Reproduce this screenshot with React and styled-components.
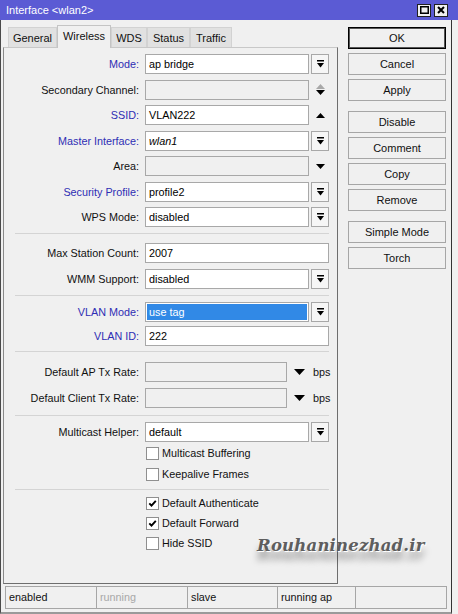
import React from "react";
import styled, { createGlobalStyle } from "styled-components";

const Global = createGlobalStyle`
  html, body { margin: 0; padding: 0; background: #f0f0f0; }
  body { font-family: "Liberation Sans", Arial, sans-serif; }
`;

const Window = styled.div`
  position: relative;
  width: 458px;
  height: 614px;
  background: #f0f0f0;
  font-family: "Liberation Sans", Arial, sans-serif;
  font-size: 10.8px;
  color: #000;
  overflow: hidden;
`;

const TitleBar = styled.div`
  height: 20px;
  background: #5b5bd4;
  color: #fff;
  display: flex;
  align-items: center;
  padding-left: 6px;
  font-size: 11px;
  box-sizing: border-box;
`;

const TitleText = styled.span`
  flex: 1;
`;

const TitleButtons = styled.div`
  display: flex;
  gap: 3px;
  margin-right: 10px;
`;

const TitleBtn = styled.div`
  width: 14px;
  height: 13px;
  background: #f0f0f0;
  border: 1px solid #202020;
  box-sizing: border-box;
  display: flex;
  align-items: center;
  justify-content: center;
`;

const Frame = styled.div`
  width: 452px;
  height: 594px;
  box-sizing: border-box;
  border-left: 1px solid #4a4a4a;
  border-right: 1px solid #333;
  border-bottom: 2px solid #9a9a9a;
  display: flex;
  flex-direction: column;
`;

const Main = styled.div`
  display: flex;
  height: 564px;
  padding-left: 2px;
`;

const LeftCol = styled.div`
  width: 335px;
  display: flex;
  flex-direction: column;
`;

const TabBar = styled.div`
  height: 27px;
  display: flex;
  align-items: flex-end;
  padding-left: 5px;
  box-sizing: border-box;
`;

const Tab = styled.div`
  width: ${(p) => p.$w}px;
  height: ${(p) => (p.$active ? 23 : 20)}px;
  box-sizing: border-box;
  display: flex;
  align-items: center;
  justify-content: center;
  background: ${(p) => (p.$active ? "#f0f0f0" : "#e1e1e1")};
  border: 1px solid ${(p) => (p.$active ? "#c4c4c4" : "#d2d2d2")};
  border-bottom: none;
  margin-bottom: ${(p) => (p.$active ? "-1px" : "0")};
  padding-bottom: ${(p) => (p.$active ? "3px" : "0")};
  position: relative;
  z-index: ${(p) => (p.$active ? 2 : 1)};
  color: #111;
  font-size: 11px;
`;

const Panel = styled.div`
  flex: 1;
  box-sizing: border-box;
  border-top: 1px solid #c8c8c8;
  border-left: 1px solid #8a8a8a;
  border-right: 1px solid #6e6e6e;
  border-bottom: 1px solid #6e6e6e;
  display: flex;
  flex-direction: column;
`;

const Section = styled.div`
  display: flex;
  flex-direction: column;
  padding-top: ${(p) => p.$pt}px;
  padding-bottom: ${(p) => p.$pb}px;
  gap: ${(p) => p.$gap}px;
`;

const Separator = styled.div`
  height: 0;
  border-top: 1px solid #d4d4d4;
  margin: 0 8px 0 11px;
`;

const Row = styled.div`
  display: flex;
  align-items: center;
  height: 20px;
`;

const Label = styled.div`
  width: 135px;
  margin-right: 6px;
  text-align: right;
  white-space: nowrap;
  color: ${(p) => (p.$blue ? "#2e2eb4" : "#111")};
`;

const Field = styled.div`
  width: ${(p) => p.$w || 164}px;
  height: 20px;
  box-sizing: border-box;
  border: 1px solid #a8a8a8;
  background: ${(p) => (p.$disabled ? "#f0f0f0" : "#fff")};
  padding: ${(p) => (p.$selected ? "1px" : "0 0 0 3px")};
  line-height: 18px;
  white-space: nowrap;
  font-style: ${(p) => (p.$italic ? "italic" : "normal")};
`;

const Highlight = styled.div`
  height: 100%;
  background: #3189e6;
  color: #fff;
  line-height: 16px;
  padding-left: 2px;
`;

const DropBtn = styled.div`
  width: 18px;
  height: 20px;
  margin-left: 2px;
  box-sizing: border-box;
  border: 1px solid #a8a8a8;
  background: #f6f6f6;
  display: flex;
  align-items: center;
  justify-content: center;
`;

const IconCell = styled.div`
  width: ${(p) => p.$w || 18}px;
  height: 20px;
  margin-left: 2px;
  display: flex;
  align-items: center;
  justify-content: center;
`;

const Unit = styled.span`
  margin-left: 4px;
  color: #111;
`;

const CheckRow = styled.label`
  display: flex;
  align-items: center;
  height: 20px;
  padding-left: 142px;
  color: #111;
`;

const Box = styled.span`
  width: 13px;
  height: 13px;
  box-sizing: border-box;
  border: 1px solid #8f8f8f;
  background: #fff;
  display: flex;
  align-items: center;
  justify-content: center;
  margin-right: 3px;
`;

const RightCol = styled.div`
  margin-left: 10px;
  padding-top: 7px;
  display: flex;
  flex-direction: column;
  gap: 10px;
`;

const BtnGroup = styled.div`
  display: flex;
  flex-direction: column;
  gap: 4px;
`;

const Button = styled.div`
  width: 98px;
  height: 22px;
  box-sizing: border-box;
  border: 1px solid ${(p) => (p.$primary ? "#000" : "#a6a6a6")};
  box-shadow: ${(p) => (p.$primary ? "inset 0 0 0 1px #555" : "none")};
  background: #f0f0f0;
  display: flex;
  align-items: center;
  justify-content: center;
  font-size: 11px;
  color: #111;
`;

const StatusBar = styled.div`
  display: flex;
  margin: 2px 0 0 4px;
  height: 23px;
`;

const Cell = styled.div`
  width: ${(p) => p.$w}px;
  box-sizing: border-box;
  border: 1px solid #a6a6a6;
  border-left: ${(p) => (p.$first ? "1px solid #a6a6a6" : "none")};
  padding-left: 3px;
  line-height: 21px;
  color: ${(p) => (p.$dim ? "#a8a8a8" : "#111")};
`;

const Watermark = styled.div`
  position: absolute;
  left: 257px;
  top: 536px;
  font-family: "DejaVu Serif", serif;
  font-style: italic;
  font-weight: bold;
  font-size: 16.5px;
  color: #5e5e5e;
  text-shadow: 1px 1px 0 #fff, 0 9px 7px rgba(0, 0, 0, 0.4);
  letter-spacing: 0.2px;
`;

const DropIcon = () => (
  <svg width="7" height="8" viewBox="0 0 7 8">
    <rect x="0" y="0" width="7" height="1.5" fill="#000" />
    <path d="M0 3 H7 L3.5 7.5 Z" fill="#000" />
  </svg>
);

const DownTri = ({ w = 9, h = 5 }) => (
  <svg width={w} height={h} viewBox={`0 0 ${w} ${h}`}>
    <path d={`M0 0 H${w} L${w / 2} ${h} Z`} fill="#000" />
  </svg>
);

const UpTri = () => (
  <svg width="9" height="5" viewBox="0 0 9 5">
    <path d="M0 5 H9 L4.5 0 Z" fill="#000" />
  </svg>
);

const UpDown = () => (
  <svg width="9" height="11" viewBox="0 0 9 11">
    <path d="M0 5 H9 L4.5 0 Z" fill="#a8a8a8" />
    <path d="M0 6 H9 L4.5 11 Z" fill="#000" />
  </svg>
);

const Check = () => (
  <svg width="9" height="9" viewBox="0 0 9 9">
    <path d="M1.3 4.3 L3.5 6.6 L7.8 1.8" stroke="#000" strokeWidth="1.9" fill="none" />
  </svg>
);

const tabs = [
  ["General", 49],
  ["Wireless", 54],
  ["WDS", 36],
  ["Status", 43],
  ["Traffic", 42],
];

const SelectRow = ({ label, value, blue, italic, selected }) => (
  <Row>
    <Label $blue={blue}>{label}:</Label>
    <Field $italic={italic} $selected={selected}>
      {selected ? <Highlight>{value}</Highlight> : value}
    </Field>
    <DropBtn>
      <DropIcon />
    </DropBtn>
  </Row>
);

const CheckItem = ({ checked, children }) => (
  <CheckRow>
    <Box>{checked && <Check />}</Box>
    {children}
  </CheckRow>
);

export default function App() {
  return (
    <Window>
      <Global />
      <TitleBar>
        <TitleText>Interface &lt;wlan2&gt;</TitleText>
        <TitleButtons>
          <TitleBtn>
            <svg width="9" height="8" viewBox="0 0 9 8">
              <rect x="0.75" y="0.75" width="7.5" height="6.5" stroke="#000" strokeWidth="1.5" fill="none" />
            </svg>
          </TitleBtn>
          <TitleBtn>
            <svg width="8" height="8" viewBox="0 0 8 8">
              <path d="M1 1 L7 7 M7 1 L1 7" stroke="#000" strokeWidth="2" />
            </svg>
          </TitleBtn>
        </TitleButtons>
      </TitleBar>
      <Frame>
        <Main>
          <LeftCol>
            <TabBar>
              {tabs.map(([t, w]) => (
                <Tab key={t} $w={w} $active={t === "Wireless"}>
                  {t}
                </Tab>
              ))}
            </TabBar>
            <Panel>
              <Section $pt={6} $pb={6} $gap={5.5}>
                <SelectRow label="Mode" value="ap bridge" blue />
                <Row>
                  <Label>Secondary Channel:</Label>
                  <Field $disabled />
                  <IconCell>
                    <UpDown />
                  </IconCell>
                </Row>
                <Row>
                  <Label $blue>SSID:</Label>
                  <Field>VLAN222</Field>
                  <IconCell>
                    <UpTri />
                  </IconCell>
                </Row>
                <SelectRow label="Master Interface" value="wlan1" blue italic />
                <Row>
                  <Label>Area:</Label>
                  <Field $disabled />
                  <IconCell>
                    <DownTri />
                  </IconCell>
                </Row>
                <SelectRow label="Security Profile" value="profile2" blue />
                <SelectRow label="WPS Mode" value="disabled" />
              </Section>
              <Separator />
              <Section $pt={9} $pb={6} $gap={6}>
                <Row>
                  <Label>Max Station Count:</Label>
                  <Field $w={184}>2007</Field>
                </Row>
                <SelectRow label="WMM Support" value="disabled" />
              </Section>
              <Separator />
              <Section $pt={6} $pb={5} $gap={4}>
                <SelectRow label="VLAN Mode" value="use tag" blue selected />
                <Row>
                  <Label $blue>VLAN ID:</Label>
                  <Field $w={184}>222</Field>
                </Row>
              </Section>
              <Separator />
              <Section $pt={10} $pb={7} $gap={6}>
                <Row>
                  <Label>Default AP Tx Rate:</Label>
                  <Field $w={142} $disabled />
                  <IconCell $w={20}>
                    <DownTri w={11} h={6} />
                  </IconCell>
                  <Unit>bps</Unit>
                </Row>
                <Row>
                  <Label>Default Client Tx Rate:</Label>
                  <Field $w={142} $disabled />
                  <IconCell $w={20}>
                    <DownTri w={11} h={6} />
                  </IconCell>
                  <Unit>bps</Unit>
                </Row>
              </Section>
              <Separator />
              <Section $pt={6} $pb={5} $gap={1}>
                <SelectRow label="Multicast Helper" value="default" />
                <CheckItem>Multicast Buffering</CheckItem>
                <CheckItem>Keepalive Frames</CheckItem>
              </Section>
              <Separator />
              <Section $pt={3} $pb={0} $gap={0}>
                <CheckItem checked>Default Authenticate</CheckItem>
                <CheckItem checked>Default Forward</CheckItem>
                <CheckItem>Hide SSID</CheckItem>
              </Section>
            </Panel>
          </LeftCol>
          <RightCol>
            <BtnGroup>
              <Button $primary>OK</Button>
              <Button>Cancel</Button>
              <Button>Apply</Button>
            </BtnGroup>
            <BtnGroup>
              <Button>Disable</Button>
              <Button>Comment</Button>
              <Button>Copy</Button>
              <Button>Remove</Button>
            </BtnGroup>
            <BtnGroup>
              <Button>Simple Mode</Button>
              <Button>Torch</Button>
            </BtnGroup>
          </RightCol>
        </Main>
        <StatusBar>
          <Cell $w={92} $first>enabled</Cell>
          <Cell $w={91} $dim>running</Cell>
          <Cell $w={90}>slave</Cell>
          <Cell $w={78}>running ap</Cell>
          <Cell $w={91} />
        </StatusBar>
      </Frame>
      <Watermark>Rouhaninezhad.ir</Watermark>
    </Window>
  );
}
